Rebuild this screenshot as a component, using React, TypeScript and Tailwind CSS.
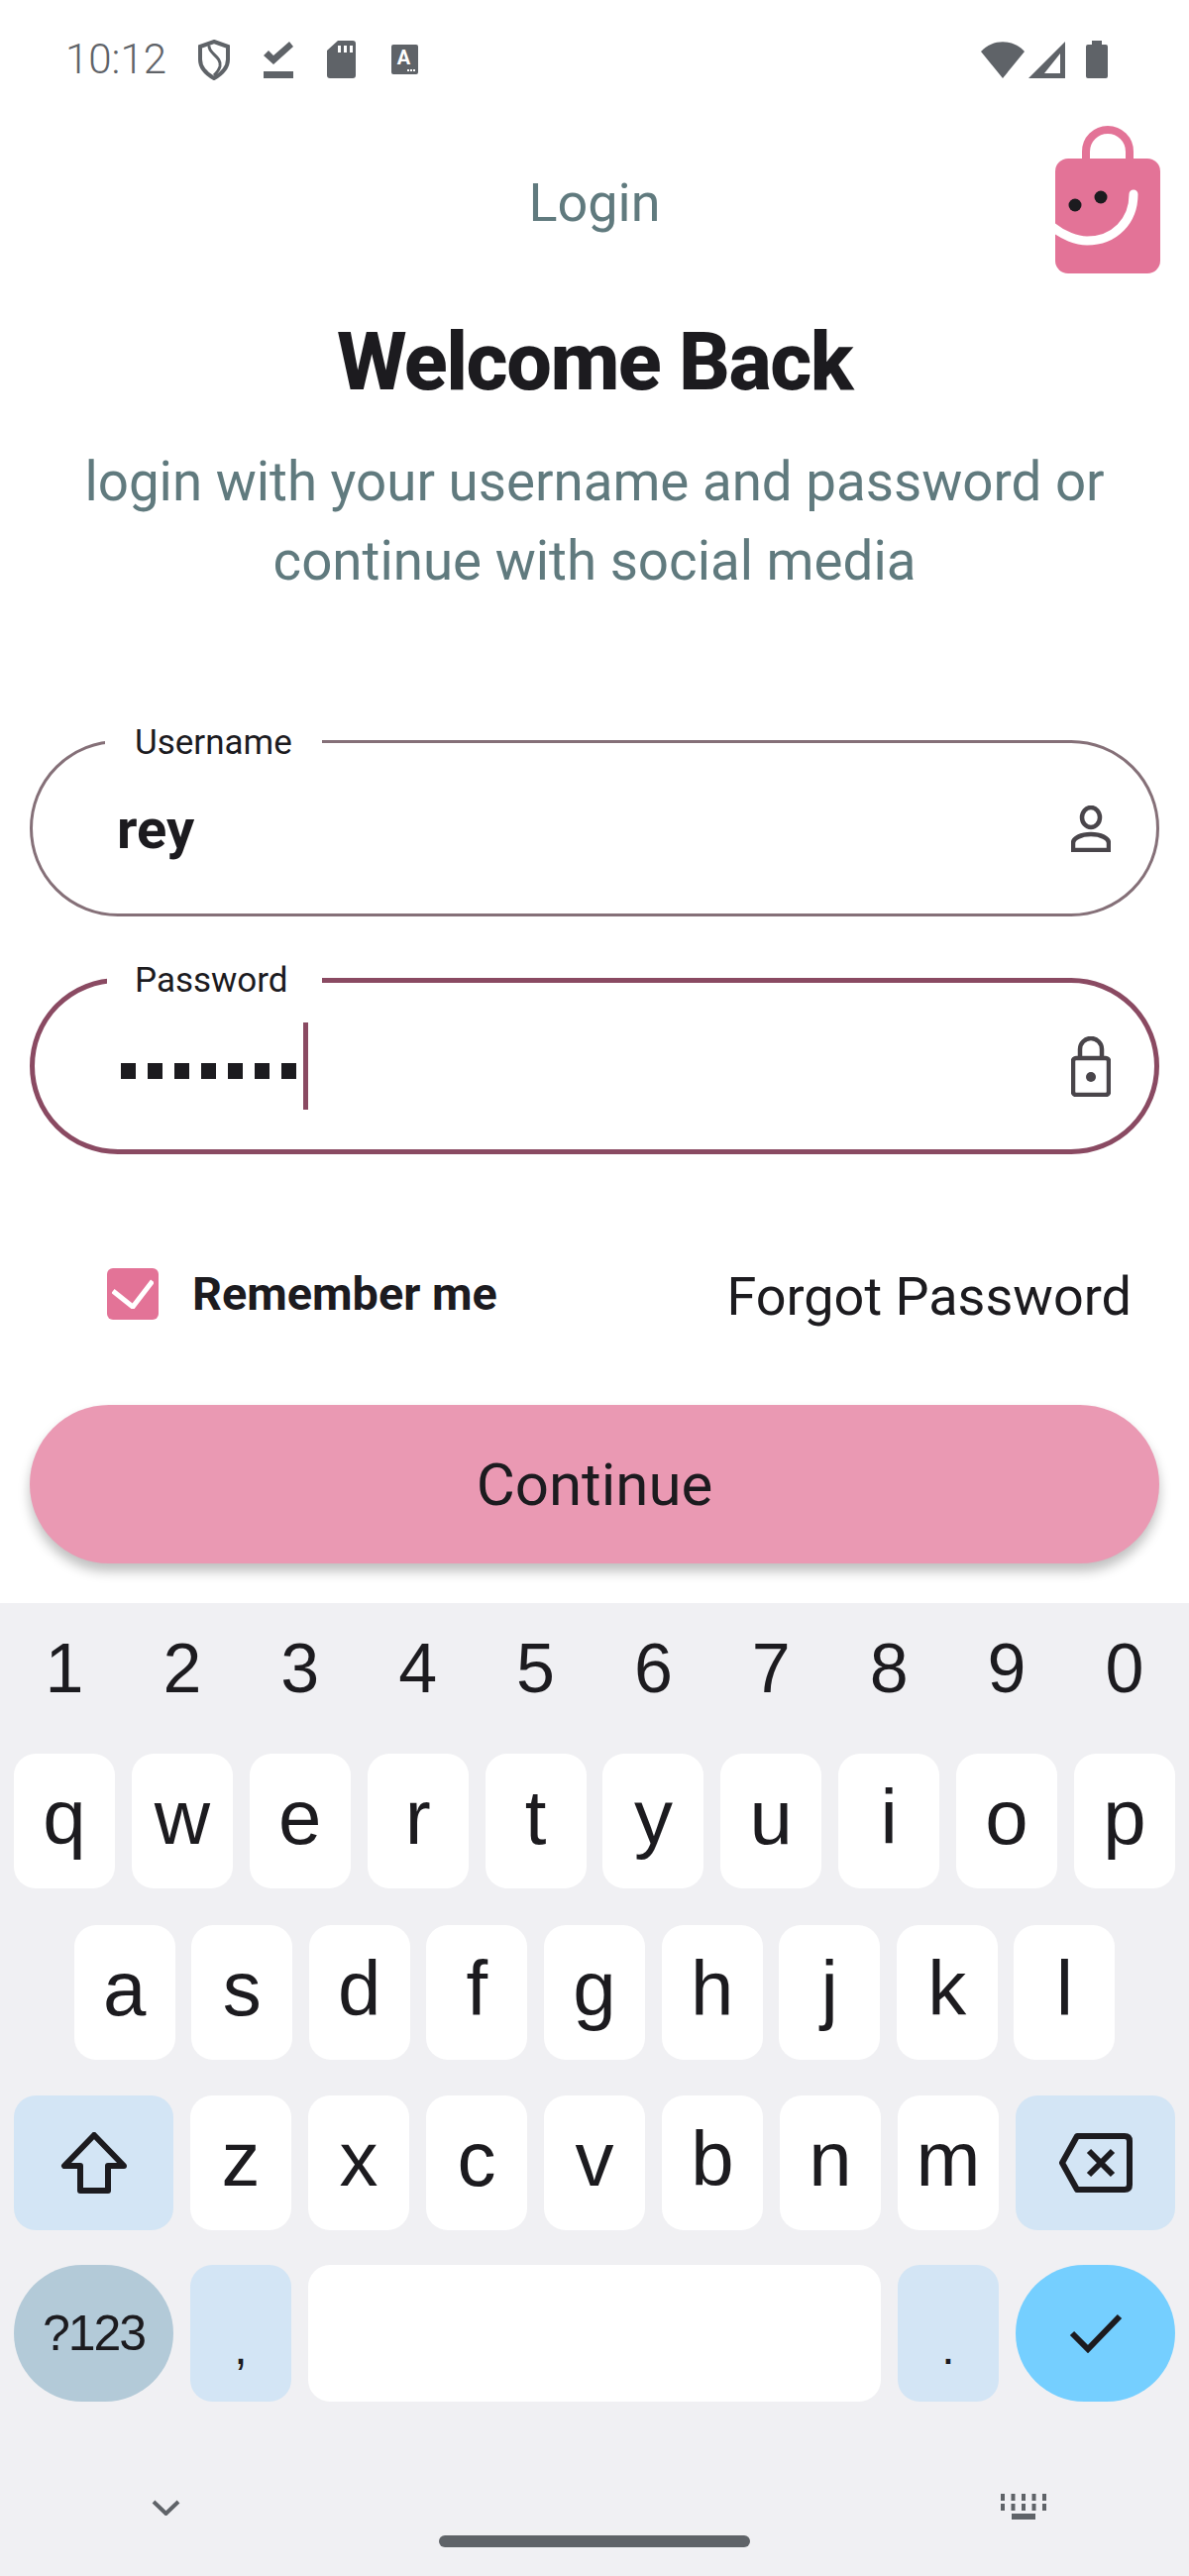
const titleFont = 'font-["Roboto","Noto_Sans",sans-serif]';

function StatusBar() {
  return (
    <div className="flex h-[120px] items-center justify-between pl-[66px] pr-[82px] text-[#5f6368]">
      <div className="flex items-center">
        <span className='w-[102px] font-["Roboto",sans-serif] text-[42px] font-light leading-none'>10:12</span>
        <div className="ml-[32px] flex items-center">
          <svg width="32" height="41" viewBox="0 0 32 41" fill="none" stroke="#5f6368" strokeWidth="4">
            <path d="M16 2 L30 7 V20 C30 29 23 35 16 39 C9 35 2 29 2 20 V7 Z" />
            <path d="M11 6 C10 14 24 17 22 27 C21 31 19 33 16 36" strokeWidth="3" />
          </svg>
          <svg className="ml-[34px]" width="30" height="38" viewBox="0 0 30 38" fill="#5f6368">
            <rect x="0" y="31" width="30" height="7" />
            <path d="M0 15 L10 24 L30 6 L26 1 L10 15 L5 10 Z" />
          </svg>
          <svg className="ml-[34px]" width="29" height="38" viewBox="0 0 29 38" fill="#5f6368">
            <path fillRule="evenodd" d="M11 0 H26 Q29 0 29 3 V35 Q29 38 26 38 H3 Q0 38 0 35 V10 Z M11 5 V12 H14 V5 Z M17 5 V12 H20 V5 Z M23 5 V12 H26 V5 Z" />
          </svg>
          <div className="relative ml-[36px] flex h-[30px] w-[27px] flex-col items-center rounded-[2px] bg-[#5f6368] pt-[5px] pr-[2px]">
            <span className='font-["Roboto",sans-serif] text-[20px] font-bold leading-[17px] text-white'>A</span>
            <div className="absolute bottom-[3px] right-[3px] flex gap-[1px]">
              <div className="h-[2px] w-[2px] bg-white" />
              <div className="h-[2px] w-[2px] bg-white" />
              <div className="h-[2px] w-[2px] bg-white" />
            </div>
          </div>
        </div>
      </div>
      <div className="flex items-center">
        <svg width="44" height="37" viewBox="0 0 44 37" fill="#5f6368">
          <path d="M0 10 C12 -3 32 -3 44 10 L22 37 Z" />
        </svg>
        <svg className="ml-[4px]" width="37" height="37" viewBox="0 0 37 37" fill="none">
          <path fillRule="evenodd" fill="#5f6368" d="M0 37 L37 0 V37 Z M16 32 H32 V12 Z" />
        </svg>
        <svg className="ml-[21px]" width="22" height="38" viewBox="0 0 22 38" fill="#5f6368">
          <path d="M6 0 H16 V4 H20 Q22 4 22 6 V36 Q22 38 20 38 H2 Q0 38 0 36 V6 Q0 4 2 4 H6 Z" />
        </svg>
      </div>
    </div>
  );
}

function BagLogo() {
  return (
    <svg width="106" height="149" viewBox="0 0 106 149" fill="none">
      <path d="M31 40 V26 A22 22 0 0 1 75 26 V40" stroke="#e37397" strokeWidth="8" />
      <rect x="0" y="33" width="106" height="116" rx="13" fill="#e37397" />
      <path d="M-4 101 C8 111 22 116 32 116 C60 116 79 96 79 69" stroke="#fff" strokeWidth="9" strokeLinecap="round" />
      <circle cx="20" cy="80" r="6.5" fill="#1c1b1f" />
      <circle cx="46" cy="72" r="6.5" fill="#1c1b1f" />
    </svg>
  );
}

function Field({ label, focused, icon, children }: { label: string; focused?: boolean; icon: React.ReactNode; children: React.ReactNode }) {
  return (
    <div
      className={
        focused
          ? 'relative flex h-[178px] items-center justify-between rounded-[89px] border-[5px] border-[#8a4a62] pl-[87px] pr-[44px]'
          : 'relative flex h-[178px] items-center justify-between rounded-[89px] border-[3px] border-[#857078] pl-[85px] pr-[46px]'
      }
    >
      <span
        className={
          focused
            ? 'absolute left-[73px] top-[-22px] bg-white pl-[28px] pr-[34px] text-[35px] leading-[40px] text-[#1c1b1f]'
            : 'absolute left-[73px] top-[-20px] bg-white px-[30px] text-[35px] leading-[40px] text-[#1c1b1f]'
        }
      >
        {label}
      </span>
      {children}
      {icon}
    </div>
  );
}

function UserIcon() {
  return (
    <svg width="40" height="47" viewBox="0 0 40 47" fill="none" stroke="#49454a" strokeWidth="4.5">
      <ellipse cx="20" cy="12" rx="9" ry="10" />
      <path d="M2 45 V38 C2 33 10 29 20 29 C30 29 38 33 38 38 V45 Z" />
    </svg>
  );
}

function LockIcon() {
  return (
    <svg width="40" height="61" viewBox="0 0 40 61" fill="none" stroke="#49454a" strokeWidth="4.5">
      <path d="M9 22 V13 A11 11 0 0 1 31 13 V22" />
      <rect x="2" y="22" width="36" height="37" rx="3" />
      <circle cx="20" cy="41" r="5" fill="#49454a" stroke="none" />
    </svg>
  );
}

const rowOne = ['q', 'w', 'e', 'r', 't', 'y', 'u', 'i', 'o', 'p'];
const rowTwo = ['a', 's', 'd', 'f', 'g', 'h', 'j', 'k', 'l'];
const rowThree = ['z', 'x', 'c', 'v', 'b', 'n', 'm'];
const digits = ['1', '2', '3', '4', '5', '6', '7', '8', '9', '0'];

function LetterKey({ letter }: { letter: string }) {
  return (
    <div className="flex h-[136px] w-[102px] items-center justify-center rounded-[22px] bg-white pb-[8px] text-[78px] leading-none text-[#1c1b1f]">
      {letter}
    </div>
  );
}

function Keyboard() {
  return (
    <div className='flex h-[982px] flex-col bg-[#f0f0f3] px-[14px] font-["Liberation_Sans",sans-serif]'>
      <div className="flex h-[152px] justify-between pt-[36px]">
        {digits.map((d) => (
          <div key={d} className="w-[102px] text-center text-[70px] leading-[60px] text-[#1c1b1f]">
            {d}
          </div>
        ))}
      </div>
      <div className="flex justify-between">
        {rowOne.map((k) => (
          <LetterKey key={k} letter={k} />
        ))}
      </div>
      <div className="mt-[37px] flex justify-center gap-[16.6px]">
        {rowTwo.map((k) => (
          <LetterKey key={k} letter={k} />
        ))}
      </div>
      <div className="mt-[36px] flex justify-between">
        <div className="flex h-[136px] w-[161px] items-center justify-center rounded-[22px] bg-[#d3e5f5]">
          <svg width="68" height="62" viewBox="0 0 68 62" fill="none" stroke="#1c1b1f" strokeWidth="6" strokeLinejoin="round">
            <path d="M34 3 L4 34 H20 V59 H48 V34 H64 Z" />
          </svg>
        </div>
        {rowThree.map((k) => (
          <LetterKey key={k} letter={k} />
        ))}
        <div className="flex h-[136px] w-[161px] items-center justify-center rounded-[22px] bg-[#d3e5f5]">
          <svg width="74" height="60" viewBox="0 0 74 60" fill="none" stroke="#1c1b1f" strokeWidth="6">
            <path d="M18 3 H66 Q71 3 71 8 V52 Q71 57 66 57 H18 L3 30 Z" strokeLinejoin="round" />
            <path d="M30 18 L54 42 M54 18 L30 42" />
          </svg>
        </div>
      </div>
      <div className="mt-[35px] flex justify-between">
        <div className="flex h-[138px] w-[161px] items-center justify-center rounded-[69px] bg-[#b3cad8] text-[50px] tracking-[-2px] text-[#1c1b1f]">?123</div>
        <div className="flex h-[138px] w-[102px] items-end justify-center rounded-[22px] bg-[#d3e5f5] pb-[30px] text-[48px] leading-none text-[#1c1b1f]">,</div>
        <div className="h-[138px] w-[578px] rounded-[22px] bg-white" />
        <div className="flex h-[138px] w-[102px] items-end justify-center rounded-[22px] bg-[#d3e5f5] pb-[30px] text-[48px] leading-none text-[#1c1b1f]">.</div>
        <div className="flex h-[138px] w-[161px] items-center justify-center rounded-[69px] bg-[#75cfff]">
          <svg width="54" height="40" viewBox="0 0 54 40" fill="none" stroke="#1c1b1f" strokeWidth="6">
            <path d="M3 20 L19 36 L51 3" />
          </svg>
        </div>
      </div>
      <div className="relative flex flex-1 items-start justify-between pl-[139px] pr-[130px] pt-[99px]">
        <svg width="29" height="16" viewBox="0 0 29 16" fill="none" stroke="#5f6368" strokeWidth="4">
          <path d="M2 2 L14.5 14 L27 2" />
        </svg>
        <svg className="mt-[-6px]" width="46" height="26" viewBox="0 0 46 26" fill="#5f6368">
          <path d="M0 0 H4 V7 H0 Z M10.5 0 H14.5 V7 H10.5 Z M21 0 H25 V7 H21 Z M31.5 0 H35.5 V7 H31.5 Z M42 0 H46 V7 H42 Z M0 10 H4 V17 H0 Z M10.5 10 H14.5 V17 H10.5 Z M21 10 H25 V17 H21 Z M31.5 10 H35.5 V17 H31.5 Z M42 10 H46 V17 H42 Z M11 20 H35 V26 H11 Z" />
        </svg>
        <div className="absolute left-[429px] top-[135px] h-[12px] w-[314px] rounded-full bg-[#5f6368]" />
      </div>
    </div>
  );
}

export default function App() {
  return (
    <div className={`flex h-[2600px] w-[1200px] flex-col overflow-hidden bg-white ${titleFont}`}>
      <div className="h-[1618px]">
        <StatusBar />
        <div className="grid h-[160px] grid-cols-[1fr_auto_1fr] items-start px-[29px]">
          <div />
          <h2 className="pt-[52px] text-[54px] leading-[66px] text-[#607a7e]">Login</h2>
          <div className="mt-[7px] justify-self-end">
            <BagLogo />
          </div>
        </div>
        <h1 className="mt-[41px] text-center text-[81px] font-extrabold leading-[90px] tracking-[-1.5px] text-[#1c1b1f]">Welcome Back</h1>
        <p className="mt-[35px] text-center text-[54.7px] leading-[80px] text-[#607a7e]">
          login with your username and password or
          <br />
          continue with social media
        </p>
        <div className="mt-[141px] flex flex-col gap-[62px] px-[30px]">
          <Field label="Username" icon={<UserIcon />}>
            <span className="pt-[2px] text-[56px] font-bold leading-none text-[#1c1b1f]">rey</span>
          </Field>
          <Field label="Password" focused icon={<LockIcon />}>
            <div className="flex items-center">
              <div className="mt-[10px] flex gap-[12px]">
                {[0, 1, 2, 3, 4, 5, 6].map((i) => (
                  <div key={i} className="h-[16px] w-[15px] bg-[#1c1b1f]" />
                ))}
              </div>
              <div className="ml-[7px] h-[88px] w-[5px] bg-[#8a4a62]" />
            </div>
          </Field>
        </div>
        <div className="mt-[115px] flex h-[52px] items-center justify-between pl-[108px] pr-[58px]">
          <div className="flex items-center gap-[34px]">
            <div className="flex h-[52px] w-[52px] items-center justify-center rounded-[6px] bg-[#e37397]">
              <svg width="42" height="30" viewBox="0 0 42 30" fill="none" stroke="#fff" strokeWidth="5">
                <path d="M1 12 L21 28 L41 2" />
              </svg>
            </div>
            <span className="text-[46.8px] font-bold leading-none text-[#1c1b1f]">Remember me</span>
          </div>
          <span className="mt-[6px] text-[54px] leading-none text-[#1c1b1f]">Forgot Password</span>
        </div>
        <div className="mx-[30px] mt-[86px] flex h-[160px] items-center justify-center rounded-[80px] bg-[#ea99b3] pt-[2px] text-[60px] text-[#1c1b1f] shadow-[0_8px_12px_rgba(0,0,0,0.25)]">
          Continue
        </div>
      </div>
      <Keyboard />
    </div>
  );
}
